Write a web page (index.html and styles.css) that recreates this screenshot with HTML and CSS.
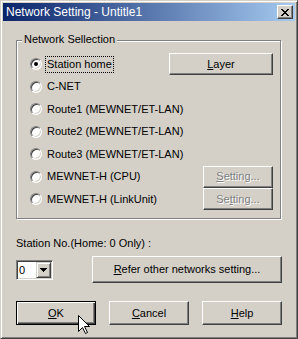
FILE: index.html
```html
<!DOCTYPE html>
<html>
<head>
<meta charset="utf-8">
<link rel="stylesheet" href="styles.css">
</head>
<body>
<div class="window">
  <div class="titlebar">
    <span class="title">Network Setting - Untitle1</span>
    <span class="close">
      <svg width="8" height="7" viewBox="0 0 8 7" shape-rendering="crispEdges">
        <path d="M0 0h2v1h-2z M6 0h2v1h-2z M1 1h2v1h-2z M5 1h2v1h-2z M2 2h4v1h-4z M3 3h2v1h-2z M2 4h4v1h-4z M1 5h2v1h-2z M5 5h2v1h-2z M0 6h2v1h-2z M6 6h2v1h-2z" fill="#000"/>
      </svg>
    </span>
  </div>
  <div class="content">
    <div class="group">
      <span class="legend">Network Sellection</span>
      <div class="row">
        <div class="opt"><span class="radio checked"></span><span class="lbl focus">Station home</span></div>
        <div class="btn layer"><span><u>L</u>ayer</span></div>
      </div>
      <div class="row">
        <div class="opt"><span class="radio"></span><span class="lbl">C-NET</span></div>
      </div>
      <div class="row">
        <div class="opt"><span class="radio"></span><span class="lbl">Route1 (MEWNET/ET-LAN)</span></div>
      </div>
      <div class="row">
        <div class="opt"><span class="radio"></span><span class="lbl">Route2 (MEWNET/ET-LAN)</span></div>
      </div>
      <div class="row">
        <div class="opt"><span class="radio"></span><span class="lbl">Route3 (MEWNET/ET-LAN)</span></div>
      </div>
      <div class="row">
        <div class="opt"><span class="radio"></span><span class="lbl">MEWNET-H (CPU)</span></div>
        <div class="btn setting"><span><u>S</u>etting...</span></div>
      </div>
      <div class="row">
        <div class="opt"><span class="radio"></span><span class="lbl">MEWNET-H (LinkUnit)</span></div>
        <div class="btn setting"><span>Se<u>t</u>ting...</span></div>
      </div>
    </div>
    <div class="station-label">Station No.(Home: 0 Only) :</div>
    <div class="station-row">
      <div class="combo">
        <span class="combo-val">0</span>
        <span class="combo-btn">
          <svg width="7" height="4" viewBox="0 0 7 4" shape-rendering="crispEdges">
            <path d="M0 0h7v1h-7z M1 1h5v1h-5z M2 2h3v1h-3z M3 3h1v1h-1z" fill="#000"/>
          </svg>
        </span>
      </div>
      <div class="btn refer"><span><u>R</u>efer other networks setting...</span></div>
    </div>
    <div class="actions">
      <div class="btn action default"><span><u>O</u>K</span></div>
      <div class="btn action"><span><u>C</u>ancel</span></div>
      <div class="btn action"><span><u>H</u>elp</span></div>
    </div>
  </div>
  <svg class="cursor" width="13" height="20" viewBox="0 0 13 20">
    <path d="M0.5 0.5 V16.5 L4.5 12.5 L7.5 18.5 L9.5 17.5 L6.5 11.5 H11.5 Z" fill="#fff" stroke="#000" stroke-width="1" stroke-linejoin="miter"/>
  </svg>
</div>
</body>
</html>
```

FILE: styles.css
```css
* {
  box-sizing: border-box;
}

html, body {
  margin: 0;
  padding: 0;
  background: #D4D0C8;
}

body {
  font-family: "Liberation Sans", Arial, sans-serif;
  font-size: 11px;
  line-height: 13px;
  color: #000;
}

.window {
  position: relative;
  width: 298px;
  height: 339px;
  background: #D4D0C8;
  border: 1px solid;
  border-color: #D4D0C8 #404040 #404040 #D4D0C8;
  box-shadow: inset 1px 1px #fff, inset -1px -1px #808080;
  padding: 2px;
  overflow: hidden;
}

.titlebar {
  height: 18px;
  background: linear-gradient(to right, #0A246A, #A6CAF0);
  display: flex;
  align-items: center;
  justify-content: space-between;
  padding: 0 2px 0 3px;
  color: #fff;
  font-size: 12px;
  line-height: 14px;
}

.close {
  width: 16px;
  height: 14px;
  background: #D4D0C8;
  border: 1px solid;
  border-color: #fff #404040 #404040 #fff;
  box-shadow: inset -1px -1px #808080;
  display: flex;
  align-items: center;
  justify-content: center;
  padding-right: 1px;
}

.close svg {
  display: block;
}

.content {
  padding: 19px 13px 0 13px;
}

.group {
  position: relative;
  width: 265px;
  height: 179px;
  border: 1px solid #808080;
  box-shadow: inset 1px 1px #fff, 1px 1px #fff;
  padding: 12px 7px 0 13px;
}

.legend {
  position: absolute;
  left: 5px;
  top: -8px;
  padding: 0 2px;
  background: #D4D0C8;
}

.row {
  height: 22.5px;
  display: flex;
  align-items: center;
  justify-content: space-between;
}

.opt {
  display: flex;
  align-items: center;
}

.radio {
  position: relative;
  width: 12px;
  height: 12px;
  border-radius: 50%;
  background: #fff;
  border: 1px solid;
  border-color: #808080 #fff #fff #808080;
  box-shadow: inset 1px 1px #404040, inset -1px -1px #D4D0C8;
  flex: none;
}

.radio.checked::after {
  content: "";
  position: absolute;
  left: 3px;
  top: 3px;
  width: 4px;
  height: 4px;
  border-radius: 50%;
  background: #000;
}

.lbl {
  margin-left: 3px;
  padding: 1px;
  border: 1px solid transparent;
  white-space: nowrap;
}

.lbl.focus {
  border: 1px dotted #000;
}

.btn {
  display: flex;
  align-items: center;
  justify-content: center;
  background: #D4D0C8;
  border: 1px solid;
  border-color: #fff #404040 #404040 #fff;
  box-shadow: inset -1px -1px #808080;
  white-space: nowrap;
  flex: none;
}

.layer {
  width: 104px;
  height: 22px;
}

.setting {
  width: 70px;
  height: 22px;
  color: #808080;
  text-shadow: 1px 1px 0 #fff;
}

.station-label {
  margin-top: 18px;
}

.station-row {
  margin-top: 6px;
  height: 27px;
  display: flex;
  align-items: center;
  justify-content: space-between;
}

.combo {
  width: 37px;
  height: 20px;
  background: #fff;
  border: 1px solid;
  border-color: #808080 #fff #fff #808080;
  box-shadow: inset 1px 1px #404040, inset -1px -1px #D4D0C8;
  padding: 1px;
  display: flex;
  justify-content: space-between;
  align-items: stretch;
}

.combo-val {
  padding-left: 1px;
  line-height: 16px;
}

.combo-btn {
  width: 15px;
  height: 16px;
  background: #D4D0C8;
  border: 1px solid;
  border-color: #D4D0C8 #404040 #404040 #D4D0C8;
  box-shadow: inset 1px 1px #fff, inset -1px -1px #808080;
  display: flex;
  align-items: center;
  justify-content: center;
}

.combo-btn svg {
  display: block;
}

.refer {
  width: 190px;
  height: 27px;
}

.actions {
  margin-top: 18px;
  display: flex;
  justify-content: space-between;
}

.action {
  width: 80px;
  height: 24px;
}

.btn.default {
  border-color: #000;
  box-shadow: inset 1px 1px #fff, inset -1px -1px #404040, inset -2px -2px #808080;
}

.cursor {
  position: absolute;
  left: 77px;
  top: 314px;
}
```
